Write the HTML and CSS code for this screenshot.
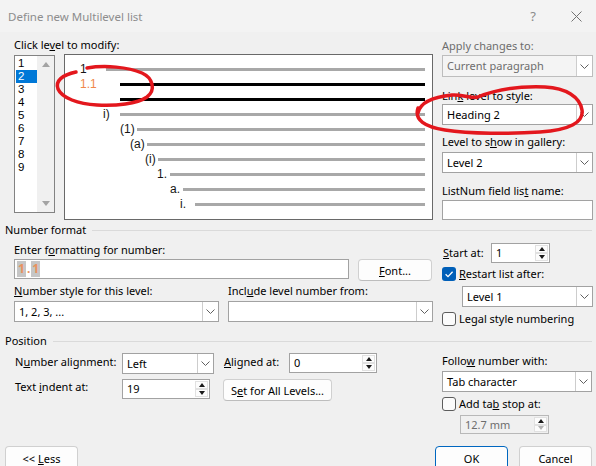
FILE: index.html
```html
<!DOCTYPE html>
<html>
<head>
<meta charset="utf-8">
<title>Define new Multilevel list</title>
<link rel="stylesheet" href="styles.css">
</head>
<body>
<div class="dialog">
  <div class="titlebar">
    <span class="title">Define new Multilevel list</span>
    <span class="help">?</span>
    <svg class="close" width="11" height="11" viewBox="0 0 11 11"><path d="M0.5 0.5L10.5 10.5M10.5 0.5L0.5 10.5" stroke="#737373" stroke-width="1" fill="none"/></svg>
  </div>

  <div class="top">
    <div class="left">
      <div class="lbl lbl-click">Click le<u>v</u>el to modify:</div>
      <div class="top-row">
        <div class="levels">
          <div class="levels-items">
            <div class="lv">1</div>
            <div class="lv sel">2</div>
            <div class="lv">3</div>
            <div class="lv">4</div>
            <div class="lv">5</div>
            <div class="lv">6</div>
            <div class="lv">7</div>
            <div class="lv">8</div>
            <div class="lv">9</div>
          </div>
          <div class="vscroll"><span class="arr-up"></span><span class="arr-down"></span></div>
        </div>
        <div class="preview">
          <div class="pr"><span class="pr-lab r1">1</span><span class="pr-line"></span></div>
          <div class="pr"><span class="pr-lab r2 orange">1.1</span><span class="pr-line dark"></span></div>
          <div class="pr"><span class="pr-lab r3"></span><span class="pr-line dark"></span></div>
          <div class="pr"><span class="pr-lab r4">i)</span><span class="pr-line"></span></div>
          <div class="pr"><span class="pr-lab r5">(1)</span><span class="pr-line"></span></div>
          <div class="pr"><span class="pr-lab r6">(a)</span><span class="pr-line"></span></div>
          <div class="pr"><span class="pr-lab r7">(i)</span><span class="pr-line"></span></div>
          <div class="pr"><span class="pr-lab r8">1.</span><span class="pr-line"></span></div>
          <div class="pr"><span class="pr-lab r9">a.</span><span class="pr-line"></span></div>
          <div class="pr"><span class="pr-lab r10">i.</span><span class="pr-line"></span></div>
        </div>
      </div>
    </div>
    <div class="rcol">
      <div class="lbl dis t1">Apply changes to:</div>
      <div class="dd disabled t1c"><span class="dd-val">Current paragraph</span><span class="dd-btn"><svg width="9" height="5" viewBox="0 0 9 5"><path d="M0.5 0.5L4.5 4.5L8.5 0.5" fill="none" stroke="#606060"/></svg></span></div>
      <div class="lbl t2">Lin<u>k</u> level to style:</div>
      <div class="dd t2c"><span class="dd-val">Heading 2</span><span class="dd-btn"><svg width="9" height="5" viewBox="0 0 9 5"><path d="M0.5 0.5L4.5 4.5L8.5 0.5" fill="none" stroke="#606060"/></svg></span></div>
      <div class="lbl t3">Level to s<u>h</u>ow in gallery:</div>
      <div class="dd t3c"><span class="dd-val">Level 2</span><span class="dd-btn"><svg width="9" height="5" viewBox="0 0 9 5"><path d="M0.5 0.5L4.5 4.5L8.5 0.5" fill="none" stroke="#606060"/></svg></span></div>
      <div class="lbl t4">ListNum field lis<u>t</u> name:</div>
      <div class="tb t4c"></div>
    </div>
  </div>

  <div class="sec sec-nf"><span>Number format</span><span class="sec-rule"></span></div>
  <div class="nf">
    <div class="left">
      <div class="lbl n1">Enter f<u>o</u>rmatting for number:</div>
      <div class="n-row1">
        <div class="tb tb-fmt"><span class="fld">1</span><span class="fdot">.</span><span class="fld">1</span></div>
        <div class="btn btn-font"><span><u>F</u>ont...</span></div>
      </div>
      <div class="n-row2">
        <div class="ncol">
          <div class="lbl"><u>N</u>umber style for this level:</div>
          <div class="dd ndd"><span class="dd-val">1, 2, 3, ...</span><span class="dd-btn"><svg width="9" height="5" viewBox="0 0 9 5"><path d="M0.5 0.5L4.5 4.5L8.5 0.5" fill="none" stroke="#606060"/></svg></span></div>
        </div>
        <div class="ncol ncol2">
          <div class="lbl">Incl<u>u</u>de level number from:</div>
          <div class="dd ndd"><span class="dd-val"></span><span class="dd-btn"><svg width="9" height="5" viewBox="0 0 9 5"><path d="M0.5 0.5L4.5 4.5L8.5 0.5" fill="none" stroke="#606060"/></svg></span></div>
        </div>
      </div>
    </div>
    <div class="rcol">
      <div class="start-row">
        <span class="start-lbl"><u>S</u>tart at:</span>
        <div class="spin spin-start"><span class="spin-val">1</span><span class="spin-btns"><span class="sb"><span class="tri-up"></span></span><span class="sb"><span class="tri-down"></span></span></span></div>
      </div>
      <div class="cb-row cb-restart">
        <svg class="cb" width="14" height="14" viewBox="0 0 14 14"><rect x="0" y="0" width="14" height="14" rx="3" fill="#005fb8"/><path d="M3.6 7.3L6 9.6L10.6 4.7" fill="none" stroke="#fff" stroke-width="1.3"/></svg>
        <span class="cb-lbl"><u>R</u>estart list after:</span>
      </div>
      <div class="dd dd-restart"><span class="dd-val">Level 1</span><span class="dd-btn"><svg width="9" height="5" viewBox="0 0 9 5"><path d="M0.5 0.5L4.5 4.5L8.5 0.5" fill="none" stroke="#606060"/></svg></span></div>
      <div class="cb-row cb-legal">
        <svg class="cb" width="14" height="14" viewBox="0 0 14 14"><rect x="0.5" y="0.5" width="13" height="13" rx="2.5" fill="#fbfbfb" stroke="#5c5c5c"/></svg>
        <span class="cb-lbl">Le<u>g</u>al style numbering</span>
      </div>
    </div>
  </div>

  <div class="sec sec-pos"><span>Position</span><span class="sec-rule"></span></div>
  <div class="pos">
    <div class="left">
      <div class="p-row p-row1">
        <span class="p-lbl">N<u>u</u>mber alignment:</span>
        <div class="dd dd-align"><span class="dd-val">Left</span><span class="dd-btn"><svg width="9" height="5" viewBox="0 0 9 5"><path d="M0.5 0.5L4.5 4.5L8.5 0.5" fill="none" stroke="#606060"/></svg></span></div>
        <span class="p-lbl p-lbl2"><u>A</u>ligned at:</span>
        <div class="spin spin-pos"><span class="spin-val">0</span><span class="spin-btns"><span class="sb"><span class="tri-up"></span></span><span class="sb"><span class="tri-down"></span></span></span></div>
      </div>
      <div class="p-row p-row2">
        <span class="p-lbl">Text <u>i</u>ndent at:</span>
        <div class="spin spin-pos"><span class="spin-val">19</span><span class="spin-btns"><span class="sb"><span class="tri-up"></span></span><span class="sb"><span class="tri-down"></span></span></span></div>
        <div class="btn btn-all"><span>S<u>e</u>t for All Levels...</span></div>
      </div>
    </div>
    <div class="rcol">
      <div class="lbl f1">Follo<u>w</u> number with:</div>
      <div class="dd f1c"><span class="dd-val">Tab character</span><span class="dd-btn"><svg width="9" height="5" viewBox="0 0 9 5"><path d="M0.5 0.5L4.5 4.5L8.5 0.5" fill="none" stroke="#606060"/></svg></span></div>
      <div class="cb-row cb-tab">
        <svg class="cb" width="14" height="14" viewBox="0 0 14 14"><rect x="0.5" y="0.5" width="13" height="13" rx="2.5" fill="#fbfbfb" stroke="#5c5c5c"/></svg>
        <span class="cb-lbl">Add ta<u>b</u> stop at:</span>
      </div>
      <div class="spin spin-tab disabled"><span class="spin-val">12.7 mm</span><span class="spin-btns"><span class="sb"><span class="tri-up"></span></span><span class="sb"><span class="tri-down light"></span></span></span></div>
    </div>
  </div>

  <div class="buttons">
    <div class="btn btn-less"><span>&lt;&lt; <u>L</u>ess</span></div>
    <div class="btn btn-ok"><span>OK</span></div>
    <div class="btn btn-cancel"><span>Cancel</span></div>
  </div>

  <svg class="annot" width="596" height="466" viewBox="0 0 596 466">
    <path d="M87 68 C105 65 128 67 142 73 C153 78 156 90 147 97 C137 104 116 106 97 105 C78 104 62 98 58 89 C55 81 62 75 76 72" fill="none" stroke="#e3171d" stroke-width="3.5" stroke-linecap="round"/>
    <path d="M418 113 C420 103 432 97 452 95 C462 94 470 99 478 97 C495 90 520 86 545 87 C566 88 580 97 582 110 C584 122 570 130 540 132 C510 134 470 134 445 130 C425 127 414 120 418 108" fill="none" stroke="#e3171d" stroke-width="3.5" stroke-linecap="round"/>
  </svg>
</div>
</body>
</html>
```

FILE: styles.css
```css
* { box-sizing: border-box; }
html, body { margin: 0; padding: 0; }
body {
  width: 596px;
  height: 466px;
  overflow: hidden;
  background: #f0f0f0;
  font-family: "Noto Sans", "DejaVu Sans", sans-serif;
  font-size: 11px;
  color: #000;
}
u { text-decoration: underline; text-underline-offset: 1px; }

.dialog { position: relative; width: 596px; height: 466px; overflow: hidden; }

/* title bar */
.titlebar {
  display: flex;
  align-items: center;
  height: 32px;
  padding-left: 8px;
  background: #f3f3f3;
}
.title { color: #8d8d8d; font-size: 11.5px; }
.help { margin-left: auto; margin-right: 35px; color: #8a8a8a; font-size: 13px; }
.close { margin-right: 14px; }

/* generic */
.left { width: 442px; padding-left: 14px; flex: none; }
.rcol { width: 151px; flex: none; display: flex; flex-direction: column; align-items: flex-start; }
.lbl { line-height: 14px; height: 14px; white-space: nowrap; }
.dis { color: #6d6d6d; }

.dd {
  display: flex;
  align-items: stretch;
  height: 21px;
  background: #fff;
  border: 1px solid #a2a2a2;
}
.dd-val { flex: 1; padding-left: 4px; line-height: 19px; white-space: nowrap; overflow: hidden; }
.dd-btn {
  width: 16px;
  flex: none;
  display: flex;
  align-items: center;
  justify-content: center;
  border-left: 1px solid #cdcdcd;
  background: #fff;
}
.dd.disabled { background: #f4f4f4; border-color: #bdbdbd; color: #6d6d6d; }
.dd.disabled .dd-val { line-height: 20px; }

.tb { background: #fff; border: 1px solid #a2a2a2; }

.btn {
  display: flex;
  align-items: center;
  justify-content: center;
  background: #fdfdfd;
  border: 1px solid #d0d0d0;
  border-bottom-color: #bdbdbd;
  border-radius: 4px;
  white-space: nowrap;
}

.spin { display: flex; height: 20px; background: #fff; border: 1px solid #a2a2a2; }
.spin-val { flex: 1; padding-left: 4px; line-height: 18px; }
.spin-btns { width: 14px; flex: none; display: flex; flex-direction: column; padding: 1px 1px 1px 0; }
.sb {
  flex: 1;
  display: flex;
  align-items: center;
  justify-content: center;
  border: 1px solid #e1e1e1;
  background: #fcfcfc;
}
.tri-up { width: 0; height: 0; border-left: 3px solid transparent; border-right: 3px solid transparent; border-bottom: 4px solid #1a1a1a; }
.tri-down { width: 0; height: 0; border-left: 3px solid transparent; border-right: 3px solid transparent; border-top: 4px solid #1a1a1a; }
.tri-down.light { border-top-color: #b3b3b3; }
.spin.disabled { background: #f0f0f0; border-color: #b8b8b8; color: #6d6d6d; }

.cb-row { display: flex; align-items: center; height: 14px; }
.cb { flex: none; }
.cb-lbl { margin-left: 3px; line-height: 14px; white-space: nowrap; }

/* top section */
.top { display: flex; height: 188px; }
.lbl-click { margin-top: 5px; line-height: 16px; height: 16px; }
.top-row { display: flex; align-items: flex-start; margin-top: 2px; }
.levels {
  display: flex;
  width: 41px;
  height: 158px;
  background: #fff;
  border: 1px solid #828282;
}
.levels-items { width: 22px; padding-top: 1px; }
.lv {
  height: 13px;
  line-height: 13px;
  font-family: "Liberation Sans", Arial, sans-serif;
  font-size: 11.5px;
  margin-left: 1px;
  width: 21px;
  padding-left: 2px;
}
.lv.sel { background: #0078d7; color: #fff; }
.vscroll {
  width: 17px;
  background: #f0f0f0;
  display: flex;
  flex-direction: column;
  justify-content: space-between;
  align-items: center;
  padding: 6px 0;
}
.arr-up { width: 0; height: 0; border-left: 4px solid transparent; border-right: 4px solid transparent; border-bottom: 5px solid #a3a3a3; }
.arr-down { width: 0; height: 0; border-left: 4px solid transparent; border-right: 4px solid transparent; border-top: 5px solid #a3a3a3; }

.preview {
  width: 369px;
  height: 166px;
  margin-left: 9px;
  margin-top: -1px;
  background: #fff;
  border: 1px solid #696969;
  padding-top: 7px;
}
.pr { display: flex; align-items: center; height: 15px; }
.pr-lab {
  flex: none;
  font-family: "Liberation Sans", Arial, sans-serif;
  font-size: 12px;
  line-height: 14px;
  height: 14px;
  color: #151515;
  white-space: nowrap;
  margin-top: -2px;
}
.pr-lab.orange { color: #f0884a; }
.pr-line { flex: 1; height: 3px; background: #a8a8a8; margin-right: 7px; }
.pr-line.dark { background: #000; }
.r1 { padding-left: 15px; width: 41px; }
.r2 { padding-left: 15px; width: 55px; }
.r3 { width: 55px; }
.r4 { padding-left: 38px; width: 55px; }
.r5 { padding-left: 55px; width: 72px; }
.r6 { padding-left: 65px; width: 82px; }
.r7 { padding-left: 80px; width: 93px; }
.r8 { padding-left: 92px; width: 105px; }
.r9 { padding-left: 105px; width: 118px; }
.r10 { padding-left: 115px; width: 130px; }

.t1 { margin-top: 7px; }
.t1c { margin-top: 2px; height: 22px; width: 151px; }
.t2 { margin-top: 12px; }
.t2c { margin-top: 1px; width: 151px; }
.t3 { margin-top: 10px; }
.t3c { margin-top: 3px; width: 151px; }
.t4 { margin-top: 11px; }
.t4c { margin-top: 2px; height: 20px; width: 151px; }

/* section heads */
.sec { display: flex; align-items: center; height: 14px; line-height: 14px; padding: 0 4px 0 5px; }
.sec-rule { flex: 1; height: 1px; background: #dadada; margin-left: 6px; }
.sec-nf { margin-top: 3px; }
.sec-pos { margin-top: 8px; }

/* number format */
.nf { display: flex; }
.n1 { margin-top: 6px; }
.n-row1 { display: flex; align-items: flex-start; margin-top: 2px; }
.tb-fmt { width: 335px; height: 20px; padding: 1px 0 0 2px; display: flex; align-items: flex-start; }
.fld, .fdot { font-size: 12px; font-weight: bold; color: #e8925e; line-height: 16px; height: 16px; }
.fld { background: #c6c6c6; padding: 0 1px; }
.fdot { padding: 0 1px; }
.btn-font { width: 74px; height: 22px; margin-left: 9px; }
.n-row2 { display: flex; margin-top: 3px; }
.ncol { width: 205px; }
.ncol2 { margin-left: 9px; }
.ndd { margin-top: 3px; }

.start-row { display: flex; margin-top: 6px; height: 20px; }
.start-lbl { width: 49px; line-height: 20px; padding-left: 1px; }
.spin-start { width: 59px; }
.cb-restart { margin-top: 4px; }
.dd-restart { margin-top: 5px; margin-left: 20px; width: 131px; }
.cb-legal { margin-top: 5px; }

/* position */
.pos { display: flex; }
.p-row { display: flex; align-items: flex-start; }
.p-row1 { margin-top: 5px; }
.p-row2 { margin-top: 5px; }
.p-lbl { width: 108px; flex: none; line-height: 17px; padding-left: 1px; white-space: nowrap; }
.p-row2 .p-lbl { line-height: 16px; }
.p-lbl2 { width: 65px; margin-left: 10px; padding-left: 0; }
.dd-align { width: 92px; }
.spin-pos { width: 88px; }
.btn-all { width: 109px; height: 22px; margin-left: 13px; }
.f1 { margin-top: 6px; }
.f1c { margin-top: 3px; width: 150px; }
.cb-tab { margin-top: 5px; }
.spin-tab { margin-top: 4px; margin-left: 18px; width: 89px; height: 19px; }
.spin-tab .spin-val { line-height: 17px; }

/* bottom buttons */
.buttons { display: flex; margin-top: 12px; padding: 0 4px 0 5px; }
.buttons .btn { height: 24px; width: 73px; }
.btn-less { width: 74px; }
.btn-ok { margin-left: auto; border-color: #0067c0; }
.btn-cancel { margin-left: 11px; }

/* hand-drawn annotation overlay */
.annot { position: absolute; left: 0; top: 0; pointer-events: none; }
```
